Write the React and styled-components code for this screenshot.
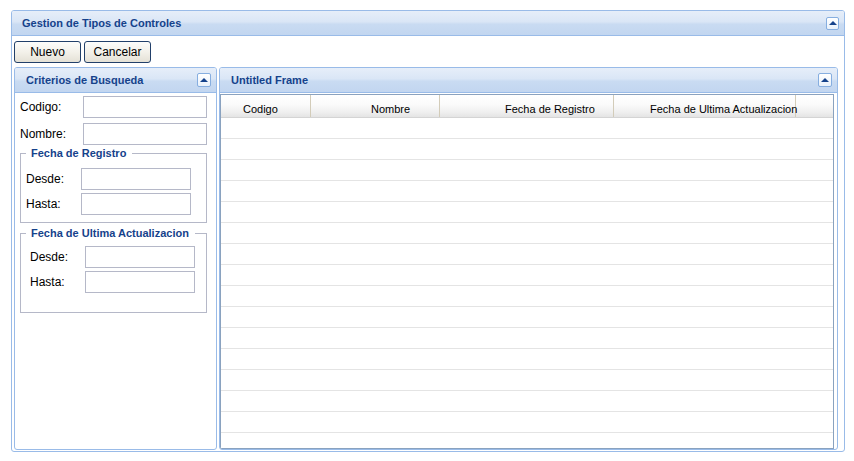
import React from 'react';
import styled, { createGlobalStyle } from 'styled-components';

const GlobalStyle = createGlobalStyle`
  html, body {
    margin: 0;
    padding: 0;
    background: #ffffff;
  }
  body {
    font-family: "Liberation Sans", Arial, sans-serif;
  }
`;

const Page = styled.div`
  padding: 10px 9px 0 11px;
`;

const Panel = styled.div`
  box-sizing: border-box;
  display: flex;
  flex-direction: column;
  width: ${p => p.$width}px;
  height: ${p => (p.$height ? `${p.$height}px` : 'auto')};
  border: 1px solid #99bbe8;
  border-radius: 3px;
  background: #ffffff;
  overflow: hidden;
`;

const Header = styled.div`
  flex: none;
  display: flex;
  align-items: center;
  justify-content: space-between;
  height: 24px;
  padding: 0 5px 0 ${p => p.$indent}px;
  border-bottom: 1px solid #99bbe8;
  background: linear-gradient(to bottom, #e6eef9 0%, #dae6f6 45%, #c9dbf2 55%, #c2d6f0 100%);
  color: #15428b;
  font: bold 11px "Liberation Sans", Arial, sans-serif;
`;

const Tool = styled.span`
  box-sizing: border-box;
  display: flex;
  align-items: center;
  justify-content: center;
  width: ${p => p.$size}px;
  height: ${p => p.$size}px;
  border: 1px solid #86aee0;
  border-radius: 2px;
  background: linear-gradient(to bottom, #ffffff, #e9f1fb);
  &::before {
    content: '';
    width: 0;
    height: 0;
    margin-top: -1px;
    border-left: 4px solid transparent;
    border-right: 4px solid transparent;
    border-bottom: 4px solid #15428b;
  }
`;

const MainBody = styled.div`
  flex: 1;
  min-height: 0;
  display: flex;
  flex-direction: column;
  padding: 5px 6px 1px 2px;
`;

const Toolbar = styled.div`
  display: flex;
  gap: 3px;
`;

const Button = styled.button`
  box-sizing: border-box;
  width: 67px;
  height: 22px;
  padding: 0;
  border: 1px solid #22406a;
  border-radius: 3px;
  background: linear-gradient(to bottom, #fdfdfb 0%, #f3f1ea 50%, #e4e1d6 100%);
  color: #000000;
  font: 12px "Liberation Sans", Arial, sans-serif;
`;

const PanelsRow = styled.div`
  flex: 1;
  min-height: 0;
  display: flex;
  gap: 2px;
  margin-top: 4px;
`;

const FormBody = styled.div`
  padding: 3px 9px 0 5px;
`;

const FieldRow = styled.div`
  display: flex;
  align-items: center;
  margin-top: ${p => p.$gap || 0}px;
  padding-left: ${p => p.$indent || 0}px;
`;

const Label = styled.span`
  width: ${p => p.$width}px;
  color: #000000;
  font-size: 12px;
`;

const Input = styled.input`
  box-sizing: border-box;
  width: ${p => p.$width}px;
  height: 22px;
  margin: 0;
  padding: 0 3px;
  border: 1px solid #b5b8c8;
  background: #ffffff;
  font: 12px "Liberation Sans", Arial, sans-serif;
`;

const Group = styled.div`
  box-sizing: border-box;
  width: 187px;
  margin-top: ${p => p.$top}px;
  border: 1px solid #b5b8c8;
  padding-bottom: ${p => p.$bottom}px;
`;

const Legend = styled.div`
  width: max-content;
  margin: -7px 0 0 5px;
  padding: 0 6px 0 5px;
  background: #ffffff;
  color: #15428b;
  font: bold 11px/13px "Liberation Sans", Arial, sans-serif;
`;

const GridBody = styled.div`
  flex: 1;
  min-height: 0;
  display: flex;
  padding: 1px 3px 0 0;
`;

const Grid = styled.div`
  flex: 1;
  display: flex;
  flex-direction: column;
  border: 1px solid #8aa2bf;
  overflow: hidden;
`;

const GridHead = styled.div`
  flex: none;
  display: flex;
  height: 22px;
  border-bottom: 1px solid #d4d4d4;
  background: linear-gradient(to bottom, #ffffff 0%, #fafafa 45%, #eeeeee 80%, #e4e4e4 100%);
`;

const HeadCell = styled.div`
  box-sizing: border-box;
  flex: ${p => (p.$width ? 'none' : '1')};
  width: ${p => (p.$width ? `${p.$width}px` : 'auto')};
  padding: 8px 0 0 ${p => p.$pad || 0}px;
  border-right: ${p => (p.$width ? '1px solid #d3ccb9' : 'none')};
  color: #000000;
  font-size: 11px;
  line-height: 13px;
  white-space: nowrap;
`;

const Row = styled.div`
  flex: none;
  height: 20px;
  border-bottom: 1px solid #e4e4e4;
`;

const columns = [
  { title: 'Codigo', width: 90, pad: 22 },
  { title: 'Nombre', width: 129, pad: 60 },
  { title: 'Fecha de Registro', width: 174, pad: 65 },
  { title: 'Fecha de Ultima Actualizacion', width: 182, pad: 36 },
];

const DateGroup = ({ title, top, bottom, first, indent }) => (
  <Group $top={top} $bottom={bottom}>
    <Legend>{title}</Legend>
    <FieldRow $gap={first} $indent={indent}>
      <Label $width={55}>Desde:</Label>
      <Input $width={110} />
    </FieldRow>
    <FieldRow $gap={3} $indent={indent}>
      <Label $width={55}>Hasta:</Label>
      <Input $width={110} />
    </FieldRow>
  </Group>
);

export default function App() {
  return (
    <Page>
      <GlobalStyle />
      <Panel $width={834} $height={442}>
        <Header $indent={10}>
          Gestion de Tipos de Controles
          <Tool $size={13} />
        </Header>
        <MainBody>
          <Toolbar>
            <Button>Nuevo</Button>
            <Button>Cancelar</Button>
          </Toolbar>
          <PanelsRow>
            <Panel $width={203}>
              <Header $indent={11}>
                Criterios de Busqueda
                <Tool $size={14} />
              </Header>
              <FormBody>
                <FieldRow>
                  <Label $width={63}>Codigo:</Label>
                  <Input $width={124} />
                </FieldRow>
                <FieldRow $gap={5}>
                  <Label $width={63}>Nombre:</Label>
                  <Input $width={124} />
                </FieldRow>
                <DateGroup title="Fecha de Registro" top={8} bottom={7} first={8} indent={5} />
                <DateGroup title="Fecha de Ultima Actualizacion" top={10} bottom={19} first={6} indent={9} />
              </FormBody>
            </Panel>
            <Panel $width={619}>
              <Header $indent={11}>
                Untitled Frame
                <Tool $size={14} />
              </Header>
              <GridBody>
                <Grid>
                  <GridHead>
                    {columns.map(c => (
                      <HeadCell key={c.title} $width={c.width} $pad={c.pad}>
                        {c.title}
                      </HeadCell>
                    ))}
                    <HeadCell />
                  </GridHead>
                  {Array(16).fill(0).map((el, index) => (
                    <Row key={index} />
                  ))}
                </Grid>
              </GridBody>
            </Panel>
          </PanelsRow>
        </MainBody>
      </Panel>
    </Page>
  );
}
